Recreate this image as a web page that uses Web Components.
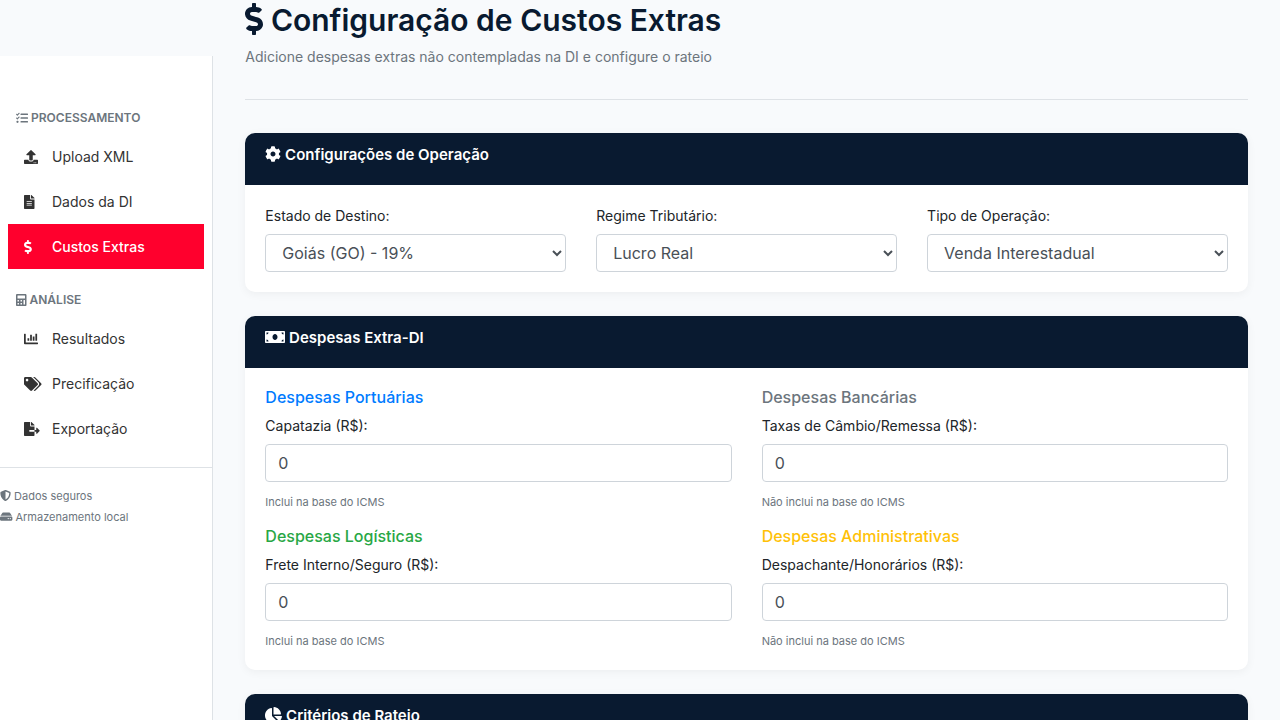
<!DOCTYPE html>
<html lang="pt-BR">
<head>
<meta charset="utf-8">
<meta name="viewport" content="width=device-width, initial-scale=1">
<title>Configuração de Custos Extras</title>
<style>
  :root {
    --navy: #091a30;
    --red: #ff002d;
    --bg: #f8fafc;
    --muted: #6c757d;
    --line: #dee2e6;
  }
  body {
    margin: 0;
    height: 100vh;
    overflow: hidden;
    background: var(--bg);
    color: #212529;
    font: 14px/21px Inter, "Liberation Sans", sans-serif;
  }
</style>
</head>
<body>
<app-shell>
  <app-sidebar slot="side">
    <nav-section icon="tasks" label="PROCESSAMENTO">
      <nav-item icon="upload" href="#upload">Upload XML</nav-item>
      <nav-item icon="file" href="#dados">Dados da DI</nav-item>
      <nav-item icon="dollar" href="#custos" active>Custos Extras</nav-item>
    </nav-section>
    <nav-section icon="calculator" label="ANÁLISE">
      <nav-item icon="chart" href="#resultados">Resultados</nav-item>
      <nav-item icon="tags" href="#precificacao">Precificação</nav-item>
      <nav-item icon="export" href="#exportacao">Exportação</nav-item>
    </nav-section>
    <side-note slot="foot" icon="shield">Dados seguros</side-note>
    <side-note slot="foot" icon="hdd">Armazenamento local</side-note>
  </app-sidebar>

  <page-header icon="dollar" heading="Configuração de Custos Extras">Adicione despesas extras não contempladas na DI e configure o rateio</page-header>

  <panel-card icon="cog" heading="Configurações de Operação" cols="3">
    <select-field label="Estado de Destino:"><option>Goiás (GO) - 19%</option></select-field>
    <select-field label="Regime Tributário:"><option>Lucro Real</option></select-field>
    <select-field label="Tipo de Operação:"><option>Venda Interestadual</option></select-field>
  </panel-card>

  <panel-card icon="money" heading="Despesas Extra-DI" cols="2">
    <cost-field heading="Despesas Portuárias" tone="#007bff" label="Capatazia (R$):">Inclui na base do ICMS</cost-field>
    <cost-field heading="Despesas Bancárias" tone="#6c757d" label="Taxas de Câmbio/Remessa (R$):">Não inclui na base do ICMS</cost-field>
    <cost-field heading="Despesas Logísticas" tone="#28a745" label="Frete Interno/Seguro (R$):">Inclui na base do ICMS</cost-field>
    <cost-field heading="Despesas Administrativas" tone="#ffc107" label="Despachante/Honorários (R$):">Não inclui na base do ICMS</cost-field>
  </panel-card>

  <panel-card icon="pie" heading="Critérios de Rateio" cols="2"></panel-card>
</app-shell>

<script>
const ICONS = {
  dollar: [288, "M209.2 233.4l-108-31.6C88.7 198.2 80 186.5 80 173.5c0-16.3 13.2-29.5 29.5-29.5h66.3c12.2 0 24.2 3.7 34.2 10.5 6.1 4.1 14.3 3.1 19.5-2l34.8-34c7.1-6.9 6.1-18.4-1.8-24.5C238 74.8 207.4 64.1 176 64V16c0-8.8-7.2-16-16-16h-32c-8.8 0-16 7.2-16 16v48h-2.5C45.8 64-5.4 118.7.5 183.6c4.2 46.1 39.4 83.6 83.8 96.6l102.5 30c12.5 3.7 21.2 15.3 21.2 28.3 0 16.3-13.2 29.5-29.5 29.5h-66.3C100 368 88 364.3 78 357.5c-6.1-4.1-14.3-3.1-19.5 2l-34.8 34c-7.1 6.9-6.1 18.4 1.8 24.5 24.5 19.2 55.1 29.9 86.5 30v48c0 8.8 7.2 16 16 16h32c8.8 0 16-7.2 16-16v-48.2c46.6-.9 90.3-28.6 105.7-72.7 21.5-61.6-14.6-124.8-72.5-141.7z"],
  tasks: [512, "M139.61 35.5a12 12 0 0 0-17 0L58.93 98.81l-22.7-22.12a12 12 0 0 0-17 0L3.53 92.41a12 12 0 0 0 0 17l47.59 47.4a12.78 12.78 0 0 0 17.61 0l15.59-15.62L156.52 69a12.09 12.09 0 0 0 .09-17zm0 159.19a12 12 0 0 0-17 0l-63.68 63.72-22.7-22.1a12 12 0 0 0-17 0L3.53 252a12 12 0 0 0 0 17L51 316.5a12.77 12.77 0 0 0 17.6 0l15.7-15.69 72.2-72.22a12 12 0 0 0 .09-16.9zM64 368c-26.49 0-48.59 21.5-48.59 48S37.53 464 64 464a48 48 0 0 0 0-96zm432 16H208a16 16 0 0 0-16 16v32a16 16 0 0 0 16 16h288a16 16 0 0 0 16-16v-32a16 16 0 0 0-16-16zm0-320H208a16 16 0 0 0-16 16v32a16 16 0 0 0 16 16h288a16 16 0 0 0 16-16V80a16 16 0 0 0-16-16zm0 160H208a16 16 0 0 0-16 16v32a16 16 0 0 0 16 16h288a16 16 0 0 0 16-16v-32a16 16 0 0 0-16-16z"],
  upload: [512, "M296 384h-80c-13.3 0-24-10.7-24-24V192h-87.7c-17.8 0-26.7-21.5-14.1-34.1L242.3 5.7c7.5-7.5 19.8-7.5 27.3 0l152.2 152.2c12.6 12.6 3.7 34.1-14.1 34.1H320v168c0 13.3-10.7 24-24 24zm216-8v112c0 13.3-10.7 24-24 24H24c-13.3 0-24-10.7-24-24V376c0-13.3 10.7-24 24-24h136v8c0 30.9 25.1 56 56 56h80c30.9 0 56-25.1 56-56v-8h136c13.3 0 24 10.7 24 24zm-124 88c0-11-9-20-20-20s-20 9-20 20 9 20 20 20 20-9 20-20zm64 0c0-11-9-20-20-20s-20 9-20 20 9 20 20 20 20-9 20-20z"],
  file: [384, "M224 136V0H24C10.7 0 0 10.7 0 24v464c0 13.3 10.7 24 24 24h336c13.3 0 24-10.7 24-24V160H248c-13.2 0-24-10.8-24-24zm64 236c0 6.6-5.4 12-12 12H108c-6.6 0-12-5.4-12-12v-8c0-6.6 5.4-12 12-12h168c6.6 0 12 5.4 12 12v8zm0-64c0 6.6-5.4 12-12 12H108c-6.6 0-12-5.4-12-12v-8c0-6.6 5.4-12 12-12h168c6.6 0 12 5.4 12 12v8zm0-72v8c0 6.6-5.4 12-12 12H108c-6.6 0-12-5.4-12-12v-8c0-6.6 5.4-12 12-12h168c6.6 0 12 5.4 12 12zm96-114.1v6.1H256V0h6.1c6.4 0 12.5 2.5 17 7l97.9 98c4.5 4.5 7 10.6 7 16.9z"],
  calculator: [448, "M400 0H48C22.4 0 0 22.4 0 48v416c0 25.6 22.4 48 48 48h352c25.6 0 48-22.4 48-48V48c0-25.6-22.4-48-48-48zM77 64H371Q384 64 384 77V179Q384 192 371 192H77Q64 192 64 179V77Q64 64 77 64zM77 256H115Q128 256 128 269V307Q128 320 115 320H77Q64 320 64 307V269Q64 256 77 256zM205 256H243Q256 256 256 269V307Q256 320 243 320H205Q192 320 192 307V269Q192 256 205 256zM77 384H115Q128 384 128 397V435Q128 448 115 448H77Q64 448 64 435V397Q64 384 77 384zM205 384H243Q256 384 256 397V435Q256 448 243 448H205Q192 448 192 435V397Q192 384 205 384zM333 256H371Q384 256 384 269V435Q384 448 371 448H333Q320 448 320 435V269Q320 256 333 256z"],
  chart: [512, "M332.8 320h38.4c6.4 0 12.8-6.4 12.8-12.8V172.8c0-6.4-6.4-12.8-12.8-12.8h-38.4c-6.4 0-12.8 6.4-12.8 12.8v134.4c0 6.4 6.4 12.8 12.8 12.8zm96 0h38.4c6.4 0 12.8-6.4 12.8-12.8V76.8c0-6.4-6.4-12.8-12.8-12.8h-38.4c-6.4 0-12.8 6.4-12.8 12.8v230.4c0 6.4 6.4 12.8 12.8 12.8zm-288 0h38.4c6.4 0 12.8-6.4 12.8-12.8v-70.4c0-6.4-6.4-12.8-12.8-12.8h-38.4c-6.4 0-12.8 6.4-12.8 12.8v70.4c0 6.4 6.4 12.8 12.8 12.8zm96 0h38.4c6.4 0 12.8-6.4 12.8-12.8V108.8c0-6.4-6.4-12.8-12.8-12.8h-38.4c-6.4 0-12.8 6.4-12.8 12.8v198.4c0 6.4 6.4 12.8 12.8 12.8zM496 384H64V80c0-8.84-7.16-16-16-16H16C7.16 64 0 71.16 0 80v336c0 17.67 14.33 32 32 32h464c8.84 0 16-7.16 16-16v-32c0-8.84-7.16-16-16-16z"],
  tags: [640, "M497.941 225.941L286.059 14.059A48 48 0 0 0 252.118 0H48C21.49 0 0 21.49 0 48v204.118a48 48 0 0 0 14.059 33.941l211.882 211.882c18.744 18.745 49.136 18.746 67.882 0l204.118-204.118c18.745-18.745 18.745-49.137 0-67.882zM112 160c-26.51 0-48-21.49-48-48s21.49-48 48-48 48 21.49 48 48-21.49 48-48 48zm513.941 133.823L421.823 497.941c-18.745 18.745-49.137 18.745-67.882 0l-.36-.36L527.64 323.522c16.999-16.999 26.36-39.6 26.36-63.64s-9.362-46.641-26.36-63.64L331.397 0h48.721a48 48 0 0 1 33.941 14.059l211.882 211.882c18.745 18.745 18.745 49.137 0 67.882z"],
  export: [576, "M384 121.9c0-6.3-2.5-12.4-7-16.9L279.1 7c-4.5-4.5-10.6-7-17-7H256v128h128zM571 308l-95.7-96.4c-10.1-10.1-27.4-3-27.4 11.3V288h-64v64h64v65.2c0 14.3 17.3 21.4 27.4 11.3L571 332c6.6-6.6 6.6-17.4 0-24zm-379 28v-32c0-8.8 7.2-16 16-16h176V160H248c-13.2 0-24-10.8-24-24V0H24C10.7 0 0 10.7 0 24v464c0 13.3 10.7 24 24 24h336c13.3 0 24-10.7 24-24V352H208c-8.8 0-16-7.2-16-16z"],
  shield: [512, "M466.5 83.7l-192-80a48.15 48.15 0 0 0-36.9 0l-192 80C27.7 91.1 16 108.6 16 128c0 198.5 114.5 335.7 221.5 380.3 11.8 4.9 25.1 4.9 36.9 0C360.1 472.6 496 349.3 496 128c0-19.4-11.7-36.9-29.5-44.3zM256.1 446.3l-.1-381 175.9 73.3c-3.3 151.4-82.1 261.1-175.8 307.7z"],
  hdd: [576, "M576 304v96c0 26.51-21.49 48-48 48H48c-26.51 0-48-21.49-48-48v-96c0-26.51 21.49-48 48-48h480c26.51 0 48 21.49 48 48zm-48-80a79.557 79.557 0 0 1 30.777 6.165L462.25 85.374A48.003 48.003 0 0 0 422.311 64H153.689a48 48 0 0 0-39.938 21.374L17.223 230.165A79.557 79.557 0 0 1 48 224h480zm-48 96c-17.673 0-32 14.327-32 32s14.327 32 32 32 32-14.327 32-32-14.327-32-32-32zm-96 0c-17.673 0-32 14.327-32 32s14.327 32 32 32 32-14.327 32-32-14.327-32-32-32z"],
  cog: [512, "M487.4 315.7l-42.6-24.6c4.3-23.2 4.3-47 0-70.2l42.6-24.6c4.9-2.8 7.1-8.6 5.5-14-11.1-35.6-30-67.8-54.7-94.6-3.8-4.1-10-5.1-14.8-2.3L380.8 110c-17.9-15.4-38.5-27.3-60.8-35.1V25.8c0-5.6-3.9-10.5-9.4-11.7-36.7-8.2-74.3-7.8-109.2 0-5.5 1.2-9.4 6.1-9.4 11.7V75c-22.2 7.9-42.8 19.8-60.8 35.1L88.7 85.5c-4.9-2.8-11-1.9-14.8 2.3-24.7 26.7-43.6 58.9-54.7 94.6-1.7 5.4.6 11.2 5.5 14L67.3 221c-4.3 23.2-4.3 47 0 70.2l-42.6 24.6c-4.9 2.8-7.1 8.6-5.5 14 11.1 35.6 30 67.8 54.7 94.6 3.8 4.1 10 5.1 14.8 2.3l42.6-24.6c17.9 15.4 38.5 27.3 60.8 35.1v49.2c0 5.6 3.9 10.5 9.4 11.7 36.7 8.2 74.3 7.8 109.2 0 5.5-1.2 9.4-6.1 9.4-11.7v-49.2c22.2-7.9 42.8-19.8 60.8-35.1l42.6 24.6c4.9 2.8 11 1.9 14.8-2.3 24.7-26.7 43.6-58.9 54.7-94.6 1.5-5.5-.7-11.3-5.6-14.1zM256 336c-44.1 0-80-35.9-80-80s35.9-80 80-80 80 35.9 80 80-35.9 80-80 80z"],
  money: [640, "M608 64H32C14.33 64 0 78.33 0 96v320c0 17.67 14.33 32 32 32h576c17.67 0 32-14.33 32-32V96c0-17.67-14.33-32-32-32zM48 400v-64c35.35 0 64 28.65 64 64H48zm0-224v-64h64c0 35.35-28.65 64-64 64zm272 176c-44.19 0-80-42.99-80-96 0-53.02 35.82-96 80-96s80 42.98 80 96c0 53.03-35.83 96-80 96zm272 48h-64c0-35.35 28.65-64 64-64v64zm0-224c-35.35 0-64-28.65-64-64h64v64z"],
  pie: [544, "M527.79 288H290.5l158.03 158.03c6.04 6.04 15.98 6.53 22.19.68 38.7-36.46 65.32-85.61 73.13-140.86 1.34-9.46-6.51-17.85-16.06-17.85zm-15.83-64.8C503.72 103.74 408.26 8.28 288.8.04 279.68-.59 272 7.1 272 16.24V240h223.77c9.14 0 16.82-7.68 16.19-16.8zM224 288V50.71c0-9.55-8.39-17.4-17.84-16.06C86.99 51.49-4.1 155.6.14 280.37 4.5 408.51 114.83 513.59 243.03 511.98c50.4-.63 96.97-16.87 135.26-44.03 7.9-5.6 8.42-17.23 1.57-24.08L224 288z"]
};

/* Defines an element whose shadow root comes from a render function. */
function define(name, render, ready) {
  customElements.define(name, class extends HTMLElement {
    connectedCallback() {
      if (this.shadowRoot) return;
      const root = this.attachShadow({ mode: "open" });
      root.innerHTML = render(key => this.getAttribute(key) || "", this);
      if (ready) ready(this, root);
    }
  });
}

define("fa-icon", attr => {
  const [w, d] = ICONS[attr("name")];
  return `<style>
    :host { display: inline-block; height: 1em; vertical-align: -0.125em; }
    svg { display: block; height: 1em; fill: currentColor; overflow: visible; }
  </style><svg viewBox="0 0 ${w} 512" aria-hidden="true"><path fill-rule="evenodd" d="${d}"/></svg>`;
});

define("app-shell", () => `<style>
  :host { display: grid; grid-template-columns: minmax(0, 1fr) minmax(0, 5fr); height: 100%; }
  main { padding: 0 32px 32px; overflow: hidden; }
</style><slot name="side"></slot><main><slot></slot></main>`);

define("app-sidebar", () => `<style>
  :host { display: block; box-sizing: border-box; margin-top: 56px; padding-top: 31px;
    background: #fff; border-right: 1px solid var(--line); }
  footer { margin-top: 16px; padding-top: 18px; border-top: 1px solid var(--line); }
</style><nav><slot></slot></nav><footer><slot name="foot"></slot></footer>`);

define("nav-section", attr => `<style>
  :host { display: block; padding: 0 8px; }
  h2 { margin: 0; padding: 23px 8px 8px; font-size: 12px; line-height: 16px; font-weight: 600; color: var(--muted); }
</style><h2><fa-icon name="${attr("icon")}"></fa-icon> ${attr("label")}</h2><slot></slot>`);

define("nav-item", attr => `<style>
  :host { display: block; }
  a { display: flex; align-items: center; gap: 8px; padding: 12px 16px; color: #333; text-decoration: none; }
  span { flex: 0 0 20px; line-height: 0; }
  :host([active]) a { background: var(--red); color: #fff; font-weight: 500; }
</style><a href="${attr("href")}"><span><fa-icon name="${attr("icon")}"></fa-icon></span><slot></slot></a>`);

define("side-note", attr => `<style>
  :host { display: block; font-size: 11px; line-height: 21px; color: var(--muted); }
</style><fa-icon name="${attr("icon")}"></fa-icon> <slot></slot>`);

define("page-header", attr => `<style>
  :host { display: block; margin-bottom: 33px; padding-bottom: 32px; border-bottom: 1px solid var(--line); }
  h1 { margin: 0 0 6px; font-size: 30px; line-height: 40px; font-weight: 600; color: var(--navy); }
  fa-icon { font-size: 32px; }
  p { margin: 0; color: var(--muted); }
</style><h1><fa-icon name="${attr("icon")}"></fa-icon> ${attr("heading")}</h1><p><slot></slot></p>`);

define("panel-card", attr => `<style>
  :host { display: block; margin-bottom: 24px; border-radius: 10px; background: #fff;
    overflow: hidden; box-shadow: 0 2px 10px rgba(0, 0, 0, .05); }
  h2 { margin: 0; padding: 12px 20px 21px; font-size: 15px; line-height: 19px; font-weight: 600;
    background: var(--navy); color: #fff; }
  fa-icon { font-size: 16px; }
  section { display: grid; grid-template-columns: repeat(${attr("cols")}, minmax(0, 1fr)); gap: 16px 30px; padding: 20px; }
</style><h2><fa-icon name="${attr("icon")}"></fa-icon> ${attr("heading")}</h2><section><slot></slot></section>`);

const CONTROL = `
  label { display: block; margin-bottom: 8px; }
  input, select { display: block; box-sizing: border-box; width: 100%; height: 38px; margin: 0; padding: 6px 12px;
    font: 16px/24px Inter, "Liberation Sans", sans-serif; color: #495057; background: #fff;
    border: 1px solid #ced4da; border-radius: 4px; }
  input { appearance: textfield; }
  input::-webkit-inner-spin-button { display: none; }`;

define("select-field", attr => `<style>
  :host { display: block; }${CONTROL}
</style><label for="control">${attr("label")}</label><select id="control"></select>`,
  (host, root) => root.getElementById("control").append(...host.querySelectorAll("option")));

define("cost-field", attr => `<style>
  :host { display: block; }${CONTROL}
  h3 { margin: 0 0 8px; font-size: 16px; line-height: 19px; font-weight: 500; color: ${attr("tone")}; }
  small { display: block; margin-top: 12px; font-size: 11px; line-height: 17px; color: var(--muted); }
</style><h3>${attr("heading")}</h3><label for="control">${attr("label")}</label><input id="control" type="number" value="0"><small><slot></slot></small>`);
</script>
</body>
</html>
